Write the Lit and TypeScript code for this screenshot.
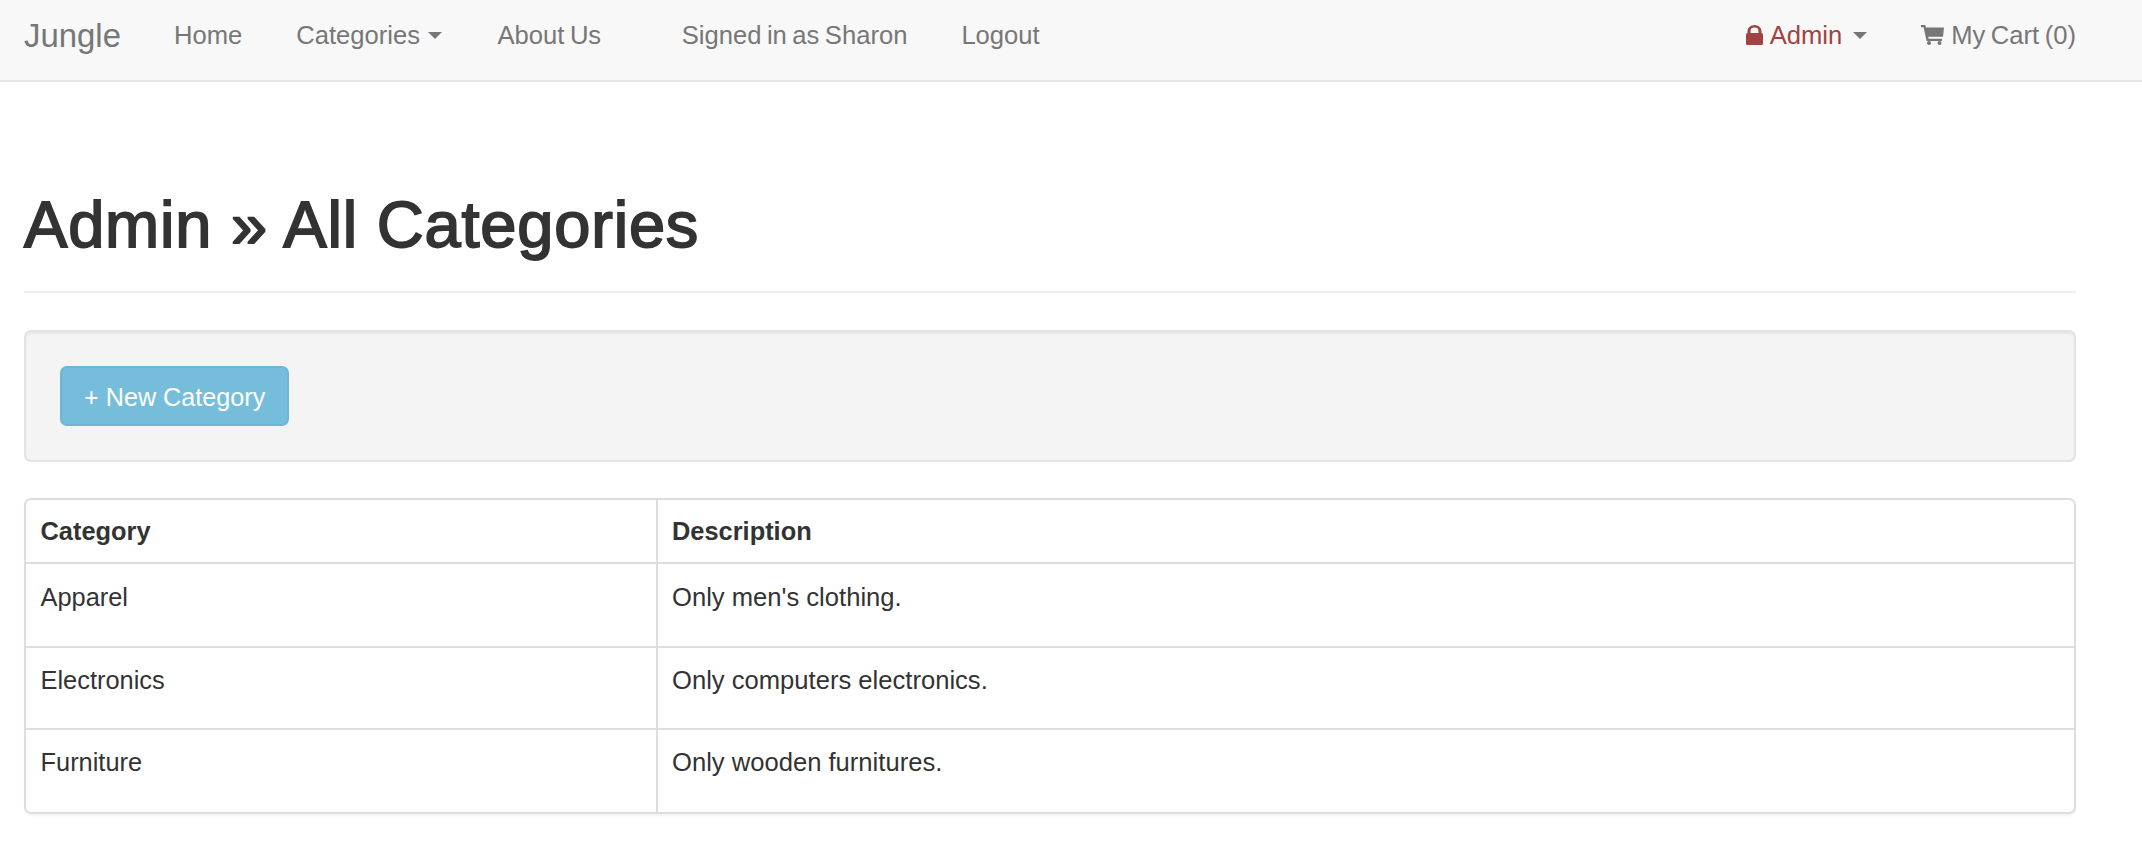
import { LitElement, html, css } from 'lit';
import { customElement } from 'lit/decorators.js';

const categories = [
  { name: 'Apparel', description: "Only men's clothing." },
  { name: 'Electronics', description: 'Only computers electronics.' },
  { name: 'Furniture', description: 'Only wooden furnitures.' },
];

@customElement('app-root')
export class AppRoot extends LitElement {
  // --- render

  render() {
    return html`
      <nav class="navbar">
        <a class="brand">Jungle</a>
        <ul class="nav">
          <li>Home</li>
          <li>Categories<span class="caret"></span></li>
          <li>About Us</li>
        </ul>
        <ul class="nav user">
          <li>Signed in as Sharon</li>
          <li>Logout</li>
        </ul>
        <ul class="nav right">
          <li class="admin">
            <svg class="lock" viewBox="0 0 17 20" aria-hidden="true">
              <path d="M1.5 8V6a7 6 0 0 1 14 0v2h-3V6a4 3.4 0 0 0-8 0v2z" fill="currentColor" />
              <rect x="0" y="8" width="17" height="12" rx="1.6" fill="currentColor" />
            </svg>
            Admin<span class="caret"></span>
          </li>
          <li class="cart">
            <svg class="cart-icon" viewBox="0 0 23 20" aria-hidden="true">
              <path d="M0 0h4.2l.8 2.6H23l-1 9.2H7.2l.5 2H21v2.2H5.6L2.6 2.2H0z" fill="currentColor" />
              <circle cx="8" cy="18" r="2" fill="currentColor" />
              <circle cx="18.5" cy="18" r="2" fill="currentColor" />
            </svg>
            My Cart (0)
          </li>
        </ul>
      </nav>
      <main class="container">
        <header class="page-header"><h1>Admin » All Categories</h1></header>
        <div class="well"><a class="btn">+ New Category</a></div>
        <table class="table">
          <thead>
            <tr><th class="first">Category</th><th>Description</th></tr>
          </thead>
          <tbody>
            ${categories.map(
              (c) => html`<tr>
                <td class="first"><p>${c.name}</p></td>
                <td class="desc"><p>${c.description}</p></td>
              </tr>`,
            )}
          </tbody>
        </table>
      </main>
    `;
  }

  // --- styles

  static styles = css`
    :host {
      display: block;
      font-family: 'Liberation Sans', Arial, sans-serif;
      font-size: 25.4px;
      line-height: 35px;
      color: #333;
      background: #fff;
      min-height: 854px;
    }

    .navbar {
      display: flex;
      align-items: center;
      height: 70px;
      padding: 0 66px 10px 24px;
      background: #f8f8f8;
      border-bottom: 2px solid #e7e7e7;
      color: #777;
      font-size: 25.6px;
      word-spacing: -1.6px;
    }

    .brand {
      font-size: 32.9px;
      margin-right: 26px;
    }

    .nav {
      display: flex;
      list-style: none;
      margin: 0;
      padding: 0;
    }

    .nav li {
      display: flex;
      align-items: center;
      padding: 0 27px;
    }

    .nav.user {
      margin-left: 26.5px;
    }

    .nav.right {
      margin-left: auto;
    }

    .nav.right li:last-child {
      padding-right: 0;
    }

    .nav.right li.admin {
      padding-right: 26px;
    }

    .caret {
      display: inline-block;
      margin: 0 1.5px 0 8px;
      border-top: 7px solid #777;
      border-left: 7px solid transparent;
      border-right: 7px solid transparent;
    }

    .admin {
      color: #a04442;
    }

    .admin .caret {
      margin-left: 10.5px;
    }

    .lock {
      width: 17px;
      height: 20px;
      margin-right: 7px;
    }

    .cart-icon {
      width: 23px;
      height: 20px;
      margin-right: 7px;
    }

    .container {
      padding: 0 66px 0 24px;
    }

    .page-header {
      margin-top: 74px;
      padding-bottom: 32px;
      border-bottom: 2px solid #eee;
    }

    h1 {
      margin: 0;
      padding: 34px 0 0;
      font-size: 65px;
      line-height: 69px;
      font-weight: 400;
      -webkit-text-stroke: 1.8px #333;
      letter-spacing: 0.8px;
    }

    .well {
      margin-top: 37px;
      padding: 34px;
      background: #f4f4f4;
      border: 2px solid #e3e3e3;
      border-radius: 7px;
      box-shadow: inset 0 2px 2px rgba(0, 0, 0, 0.05);
    }

    .btn {
      display: inline-block;
      height: 60px;
      box-sizing: border-box;
      padding: 12px 22px 10px;
      color: #fff;
      background: #76bddc;
      border: 2px solid #6cb6d6;
      border-radius: 7px;
      font-size: 25.2px;
    }

    .table {
      width: 100%;
      margin-top: 36px;
      border-collapse: separate;
      border-spacing: 0;
      border: 2px solid #ddd;
      border-radius: 7px;
      table-layout: fixed;
      box-shadow: 0 2px 2px rgba(0, 0, 0, 0.05);
    }

    th,
    td {
      padding: 15px 14px 14px 14.5px;
      text-align: left;
      vertical-align: top;
      border-top: 2px solid #ddd;
      border-left: 2px solid #ddd;
    }

    th {
      border-top: 0;
      padding-top: 14px;
      padding-bottom: 13px;
      font-weight: 700;
    }

    .first {
      border-left: 0;
      width: 601px;
    }

    .desc {
      font-size: 25.6px;
    }

    tbody tr:first-child td {
      padding-top: 16px;
    }

    tbody tr:last-child td {
      padding-bottom: 15px;
    }

    p {
      margin: 0 0 16.5px;
    }
  `;
}
